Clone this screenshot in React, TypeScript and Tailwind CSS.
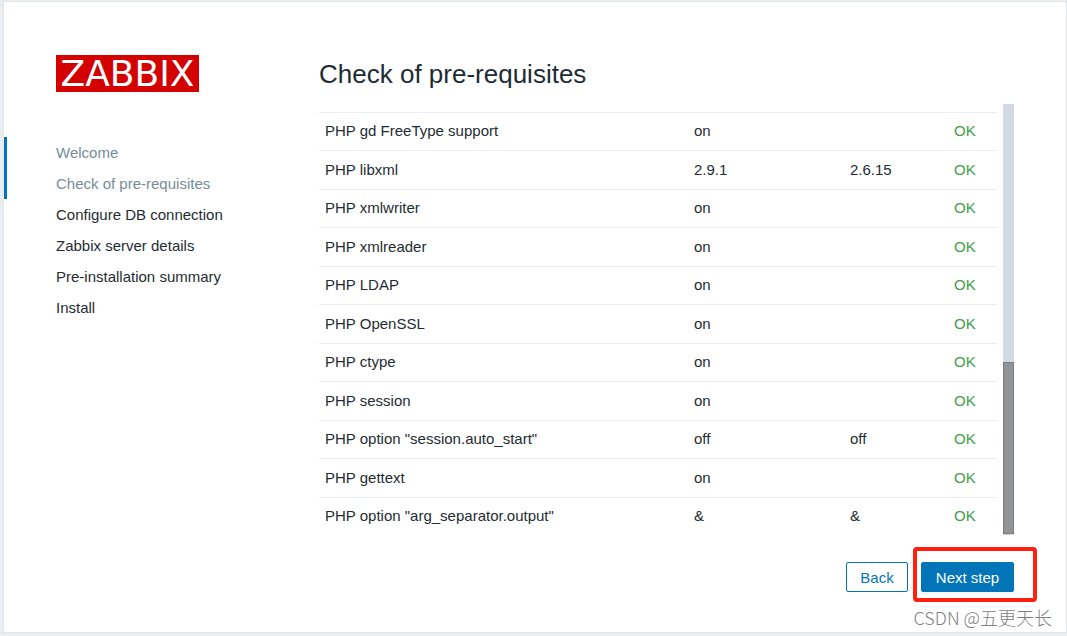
interface Requirement {
  readonly name: string;
  readonly current: string;
  readonly required?: string;
}

interface SetupStep {
  readonly label: string;
  readonly isReached?: boolean;
}

const steps: SetupStep[] = [
  { label: 'Welcome', isReached: true },
  { label: 'Check of pre-requisites', isReached: true },
  { label: 'Configure DB connection' },
  { label: 'Zabbix server details' },
  { label: 'Pre-installation summary' },
  { label: 'Install' },
];

const requirements: Requirement[] = [
  { name: 'PHP gd FreeType support', current: 'on' },
  { name: 'PHP libxml', current: '2.9.1', required: '2.6.15' },
  { name: 'PHP xmlwriter', current: 'on' },
  { name: 'PHP xmlreader', current: 'on' },
  { name: 'PHP LDAP', current: 'on' },
  { name: 'PHP OpenSSL', current: 'on' },
  { name: 'PHP ctype', current: 'on' },
  { name: 'PHP session', current: 'on' },
  { name: 'PHP option "session.auto_start"', current: 'off', required: 'off' },
  { name: 'PHP gettext', current: 'on' },
  { name: 'PHP option "arg_separator.output"', current: '&', required: '&' },
];

function SetupSidebar() {
  return (
    <aside className="w-[315px] shrink-0">
      <div className="ml-[52px] flex h-[37px] w-[143px] items-center justify-center bg-[#d40000] font-['DejaVu_Sans',sans-serif] text-[36px] leading-[37px] text-white">
        ZABBIX
      </div>
      <ul className="mt-[45px]">
        {steps.map((step) => (
          <li
            key={step.label}
            className={
              step.isReached
                ? 'border-l-3 border-[#0275b8] pl-[49px] leading-[31px] text-[#768d99]'
                : 'border-l-3 border-transparent pl-[49px] leading-[31px]'
            }
          >
            {step.label}
          </li>
        ))}
      </ul>
    </aside>
  );
}

function RequirementsTable() {
  return (
    <div className="mt-[15px] flex gap-1.5">
      <div className="min-w-0 flex-1 pt-2">
        <table className="w-full table-fixed border-separate border-spacing-0 text-left">
          <colgroup>
            <col />
            <col className="w-[156px]" />
            <col className="w-[104px]" />
            <col className="w-[49px]" />
          </colgroup>
          <tbody>
            {requirements.map((item) => (
              <tr key={item.name} className="odd:h-[38px] even:h-[39px]">
                <td className="border-t border-[#ebeef0] px-1.5 pb-px">{item.name}</td>
                <td className="border-t border-[#ebeef0] px-1.5 pb-px">{item.current}</td>
                <td className="border-t border-[#ebeef0] px-1.5 pb-px">{item.required}</td>
                <td className="border-t border-[#ebeef0] px-1.5 pb-px text-[#429e47]">OK</td>
              </tr>
            ))}
          </tbody>
        </table>
      </div>
      {/* scrollbar track, thumb sits at the bottom */}
      <div className="flex w-[11px] flex-col justify-end bg-[#d1dae0] pb-px">
        <div className="h-2/5 border border-[#7b7c7e] bg-[#939496]" />
      </div>
    </div>
  );
}

export default function App() {
  return (
    <div className="flex min-h-screen bg-[#ebeef0] pt-px pb-[3px] pl-[3px] font-['Liberation_Sans',Arial,sans-serif] text-[15px] leading-5 text-[#1f2c33]">
      <div className="relative flex flex-1 border border-[#dfe4e7] bg-white pt-[53px] pr-[52px] pb-10">
        <SetupSidebar />
        <main className="min-w-0 flex-1 pt-1">
          <h1 className="text-[26px] leading-[30px]">Check of pre-requisites</h1>
          <RequirementsTable />
          <div className="mt-[27px] flex justify-end gap-[13px]">
            <button
              type="button"
              className="h-[30px] w-[62px] rounded-xs border border-[#0275b8] bg-white pt-0.5 text-[#0275b8]"
            >
              Back
            </button>
            <div className="relative">
              <button
                type="button"
                className="h-[30px] w-[93px] rounded-xs border border-[#0275b8] bg-[#0275b8] pt-0.5 text-white"
              >
                Next step
              </button>
              <div className="pointer-events-none absolute -top-[15px] -right-[23px] -bottom-[10px] -left-2 rounded-sm border-4 border-[#ff2010]" />
            </div>
          </div>
        </main>
        <span className="absolute right-3.5 bottom-[3px] font-['Noto_Sans_CJK_SC',sans-serif] text-[18px] leading-6 font-light whitespace-nowrap text-[#808080]">
          CSDN @五更天长
        </span>
      </div>
    </div>
  );
}
